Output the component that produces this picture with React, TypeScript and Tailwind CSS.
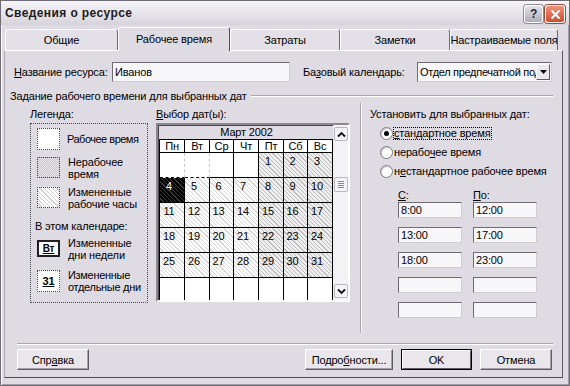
import React from "react";

const days = ["Пн", "Вт", "Ср", "Чт", "Пт", "Сб", "Вс"];
const weeks: (number | null)[][] = [
  [null, null, null, null, 1, 2, 3],
  [4, 5, 6, 7, 8, 9, 10],
  [11, 12, 13, 14, 15, 16, 17],
  [18, 19, 20, 21, 22, 23, 24],
  [25, 26, 27, 28, 29, 30, 31],
  [null, null, null, null, null, null, null],
];

function U({ children }: { children: React.ReactNode }) {
  return <span className="underline underline-offset-[1px] decoration-1">{children}</span>;
}

const field =
  "border border-t-[#6e6b73] border-l-[#6e6b73] border-r-[#cfccd3] border-b-[#cfccd3] bg-[#f7f6f9]";
const btn =
  "h-[21px] flex items-center justify-center bg-[#e9e7ec] border border-t-white border-l-white border-r-[#5f5d64] border-b-[#5f5d64] shadow-[inset_-1px_-1px_0_#a7a4ac]";

function Tab({ w, children, active }: { w: string; children: React.ReactNode; active?: boolean }) {
  if (active) {
    return (
      <div
        className={`${w} h-[24px] -mb-px relative z-10 flex items-center justify-center whitespace-nowrap bg-[#dfdbe3] border-t border-l border-r border-t-white border-l-white border-r-[#4f4d54] rounded-t-[3px] pb-[2px]`}
      >
        {children}
      </div>
    );
  }
  return (
    <div
      className={`${w} h-[21px] flex items-center justify-center whitespace-nowrap bg-[#e3e0e7] border-t border-l border-r border-t-white border-l-white border-r-[#6d6a72] rounded-t-[3px]`}
    >
      {children}
    </div>
  );
}

function Radio({ checked, children, focus }: { checked?: boolean; children: React.ReactNode; focus?: boolean }) {
  return (
    <div className="h-[19px] flex items-center pl-[10px]">
      <div className="w-[13px] h-[13px] rounded-full bg-white border border-[#7d7a83] shadow-[inset_1px_1px_0_#c9c6cd] flex items-center justify-center">
        {checked && <div className="w-[5px] h-[5px] rounded-full bg-black" />}
      </div>
      <span
        className={`ml-0 h-[13px] leading-[11px] pr-[1px] border border-dotted whitespace-nowrap ${
          focus ? "border-black" : "border-transparent"
        }`}
      >
        {children}
      </span>
    </div>
  );
}

function Cell({ n, col, row }: { n: number | null; col: number; row: number }) {
  const lightSep = row === 0 && n === null && col < 2;
  const border = lightSep ? "border-r border-r-[#c8c8c8] border-dashed" : "border-r border-r-black";
  let bg = "bg-white";
  if (n === 4) {
    bg = "bg-[repeating-linear-gradient(45deg,#000000_0px,#000000_2px,#3a3a3a_2px,#3a3a3a_3px)] text-white";
  } else if (n !== null) {
    bg =
      col >= 4
        ? "bg-[repeating-linear-gradient(45deg,#efefef_0px,#efefef_2px,#bdbdbd_2px,#bdbdbd_3px)]"
        : "bg-[repeating-linear-gradient(45deg,#ffffff_0px,#ffffff_2px,#d6d6d6_2px,#d6d6d6_3px)]";
  }
  return (
    <div className={`h-[25px] ${border} border-b border-b-black ${bg} text-center pr-[6px] pt-[1px] text-[11px] leading-[14px]`}>
      {n ?? ""}
    </div>
  );
}

function Chevron({ up }: { up?: boolean }) {
  return (
    <svg width="9" height="7" viewBox="0 0 9 7">
      <path d={up ? "M1 5.5 L4.5 2 L8 5.5" : "M1 1.5 L4.5 5 L8 1.5"} stroke="#111" strokeWidth="1.8" fill="none" />
    </svg>
  );
}

export default function App() {
  return (
    <div className="w-[570px] h-[386px] overflow-hidden bg-[#dfdbe3] border border-[#6f6c75] shadow-[inset_1px_1px_0_#ffffff,inset_-1px_-1px_0_#9e9ba4] font-['Liberation_Sans',Arial,sans-serif] text-[11px] leading-[14px] tracking-[-0.15px] text-black flex flex-col">
      {/* Title bar */}
      <div className="h-[24px] flex items-center justify-between pl-[4px] pr-[4px] bg-[linear-gradient(180deg,#f6f5f8_0%,#e6e3ea_55%,#d5d2d9_100%)]">
        <span className="font-bold text-[12px] tracking-[0.4px] text-[#1c1b20]">Сведения о ресурсе</span>
        <div className="flex items-center gap-[2px] pt-[2px]">
          <div className="w-[19px] h-[18px] rounded-[3px] border border-white shadow-[0_0_0_1px_#8d8a94] bg-[linear-gradient(180deg,#e4e3e9,#aeadb8)] flex items-center justify-center text-[12px] font-bold text-[#2b2b33]">
            ?
          </div>
          <div className="w-[20px] h-[18px] rounded-[3px] border border-white shadow-[0_0_0_1px_#9c4c3b] bg-[linear-gradient(180deg,#f0937a,#d24a2d)] flex items-center justify-center">
            <svg width="11" height="11" viewBox="0 0 11 11">
              <path d="M1.5 1.5 L9.5 9.5 M9.5 1.5 L1.5 9.5" stroke="white" strokeWidth="2" />
            </svg>
          </div>
        </div>
      </div>

      {/* Tabs */}
      <div className="h-[25px] flex items-end pl-[4px]">
        <Tab w="w-[113px]">Общие</Tab>
        <Tab w="w-[112px]" active>
          Рабочее время
        </Tab>
        <Tab w="w-[110px]">Затраты</Tab>
        <Tab w="w-[110px]">Заметки</Tab>
        <Tab w="w-[108px]">Настраиваемые поля</Tab>
      </div>

      {/* Panel */}
      <div className="ml-[3px] w-[559px] h-[328px] border border-t-white border-l-[#a9a6ae] border-r-[#5a5860] border-b-[#4b4950] flex flex-col">
        {/* Name row */}
        <div className="mt-[11px] h-[20px] flex items-center pl-[9px]">
          <span className="w-[98px] whitespace-nowrap">
            <U>Н</U>азвание ресурса:
          </span>
          <div className={`w-[178px] h-[20px] ${field} flex items-center pl-[2px]`}>Иванов</div>
          <span className="ml-[13px] w-[114px] whitespace-nowrap">
            Ба<U>з</U>овый календарь:
          </span>
          <div className={`w-[135px] h-[20px] ${field} flex items-center pl-[2px] pr-[1px]`}>
            <span className="w-[116px] overflow-hidden whitespace-nowrap tracking-[-0.3px]">Отдел предпечатной подготовки</span>
            <div className="ml-auto w-[14px] h-[16px] bg-[#ebe9ee] border border-t-white border-l-white border-r-[#5f5d64] border-b-[#5f5d64] flex items-center justify-center">
              <svg width="7" height="4" viewBox="0 0 7 4">
                <path d="M0 0 L7 0 L3.5 4 Z" fill="#000" />
              </svg>
            </div>
          </div>
        </div>

        {/* Group heading */}
        <div className="mt-[7px] h-[14px] flex items-center pl-[5px] pr-[9px]">
          <span className="whitespace-nowrap">Задание рабочего времени для выбранных дат</span>
          <div className="flex-1 ml-[4px] h-[2px] border-t border-t-[#aaa7af] border-b border-b-white" />
        </div>

        {/* Columns */}
        <div className="mt-[4px] h-[226px] flex pl-[25px]">
          {/* Legend */}
          <div className="w-[118px] flex flex-col">
            <span className="h-[14px]">Легенда:</span>
            <div className="mt-[2px] h-[180px] border border-dotted border-[#47454c] pl-[6px] flex flex-col">
              <div className="mt-[4px] h-[22px] flex items-center">
                <div className="w-[23px] h-[22px] bg-white border border-dotted border-[#47454c]" />
                <span className="ml-[7px] whitespace-nowrap tracking-[-0.5px]">Рабочее время</span>
              </div>
              <div className="mt-[7px] h-[21px] flex items-center">
                <div className="w-[23px] h-[21px] border border-dotted border-[#47454c] bg-[repeating-conic-gradient(#c4c1c8_0_25%,#ebe9ee_0_50%)] bg-[length:2px_2px]" />
                <span className="ml-[8px] leading-[12px]">
                  Нерабочее
                  <br />
                  время
                </span>
              </div>
              <div className="mt-[9px] h-[21px] flex items-center">
                <div className="w-[23px] h-[21px] border border-dotted border-[#47454c] bg-[repeating-linear-gradient(45deg,#ffffff_0px,#ffffff_2px,#cfcfcf_2px,#cfcfcf_3px)]" />
                <span className="ml-[8px] leading-[12px]">
                  Измененные
                  <br />
                  рабочие часы
                </span>
              </div>
              <span className="mt-[11px] h-[14px] -ml-[2px]">В этом календаре:</span>
              <div className="mt-[7px] h-[17px] flex items-center">
                <div className="w-[23px] h-[17px] bg-white border-2 border-[#1f1e22] flex items-center justify-center font-bold text-[10px]">
                  <U>Вт</U>
                </div>
                <span className="ml-[8px] leading-[12px]">
                  Измененные
                  <br />
                  дни недели
                </span>
              </div>
              <div className="mt-[13px] h-[22px] flex items-center">
                <div className="w-[23px] h-[22px] bg-white border border-dotted border-[#47454c] flex items-center justify-center font-bold text-[11px]">
                  <U>31</U>
                </div>
                <span className="ml-[8px] leading-[12px] whitespace-nowrap tracking-[-0.3px]">
                  Измененные
                  <br />
                  отдельные дни
                </span>
              </div>
            </div>
          </div>

          {/* Calendar */}
          <div className="ml-[8px] w-[194px] flex flex-col">
            <span className="h-[14px]">
              <U>В</U>ыбор дат(ы):
            </span>
            <div className="mt-[2px] h-[179px] border-2 border-t-[#8a8790] border-l-[#8a8790] border-r-white border-b-white shadow-[inset_1px_1px_0_#48464c] flex overflow-hidden bg-[#dfdbe3]">
              <div className="w-[175px] flex flex-col">
                <div className="h-[14px] text-center leading-[14px] pl-[2px]">Март 2002</div>
                <div className="ml-[1px] w-[174px] border-l border-l-black border-t border-t-black flex-1 overflow-hidden bg-white">
                  <div className="grid grid-cols-[25px_25px_24px_25px_25px_24px_25px]">
                    {days.map((d) => (
                      <div key={d} className="h-[13px] border-r border-r-black border-b border-b-black text-center leading-[12px]">
                        {d}
                      </div>
                    ))}
                    {weeks.map((w, r) =>
                      w.map((n, c) => <Cell key={`${r}-${c}`} n={n} col={c} row={r} />)
                    )}
                  </div>
                </div>
              </div>
              <div className="w-[15px] bg-[#f3f2f5] flex flex-col items-center border-l border-l-[#efeef2]">
                <div className="mt-[2px] w-[14px] h-[14px] rounded-[2px] bg-[#f4f3f7] border border-[#b9b6be] flex items-center justify-center">
                  <Chevron up />
                </div>
                <div className="mt-[36px] w-[14px] h-[15px] rounded-[2px] bg-[#f4f3f7] border border-[#b9b6be] flex flex-col items-center justify-center gap-[1px]">
                  <div className="w-[6px] h-px bg-[#8b8891]" />
                  <div className="w-[6px] h-px bg-[#8b8891]" />
                  <div className="w-[6px] h-px bg-[#8b8891]" />
                  <div className="w-[6px] h-px bg-[#8b8891]" />
                </div>
                <div className="mt-auto mb-[2px] w-[14px] h-[14px] rounded-[2px] bg-[#f4f3f7] border border-[#b9b6be] flex items-center justify-center">
                  <Chevron />
                </div>
              </div>
            </div>
          </div>

          {/* Separator */}
          <div className="ml-[10px] w-[2px] -mt-[4px] border-l border-l-[#aaa7af] border-r border-r-white" />

          {/* Right column */}
          <div className="ml-[8px] flex flex-col">
            <span className="h-[14px] whitespace-nowrap">Установить для выбранных дат:</span>
            <div className="mt-[3px]">
              <Radio checked focus>
                <U>с</U>тандартное время
              </Radio>
              <Radio>
                нерабо<U>ч</U>ее время
              </Radio>
              <Radio>
                н<U>е</U>стандартное рабочее время
              </Radio>
            </div>
            <div className="mt-[7px] h-[14px] flex pl-[28px]">
              <span className="w-[75px]">
                <U>С</U>:
              </span>
              <span>
                <U>П</U>о:
              </span>
            </div>
            <div className="flex flex-col gap-[9px] pl-[28px]">
              {[
                ["8:00", "12:00"],
                ["13:00", "17:00"],
                ["18:00", "23:00"],
                ["", ""],
                ["", ""],
              ].map(([a, b], i) => (
                <div key={i} className="flex">
                  <div className={`w-[64px] h-[16px] ${field} pl-[2px] leading-[14px]`}>{a}</div>
                  <div className={`ml-[11px] w-[64px] h-[16px] ${field} pl-[2px] leading-[14px]`}>{b}</div>
                </div>
              ))}
            </div>
          </div>
        </div>

        {/* Bottom separator */}
        <div className="mt-[10px] ml-[12px] mr-[9px] h-[2px] border-t border-t-[#aaa7af] border-b border-b-white" />

        {/* Buttons */}
        <div className="mt-[4px] h-[21px] flex pl-[12px] pr-[10px]">
          <div className={`w-[72px] ${btn}`}>
            Спр<U>а</U>вка
          </div>
          <div className="flex-1" />
          <div className={`w-[88px] ${btn}`}>
            Подро<U>б</U>ности...
          </div>
          <div className="ml-[8px] w-[71px] h-[21px] border border-black">
            <div className="w-full h-full flex items-center justify-center bg-[#e9e7ec] border border-t-white border-l-white border-r-[#5f5d64] border-b-[#5f5d64]">
              OK
            </div>
          </div>
          <div className={`ml-[8px] w-[72px] ${btn}`}>Отмена</div>
        </div>
      </div>
    </div>
  );
}
